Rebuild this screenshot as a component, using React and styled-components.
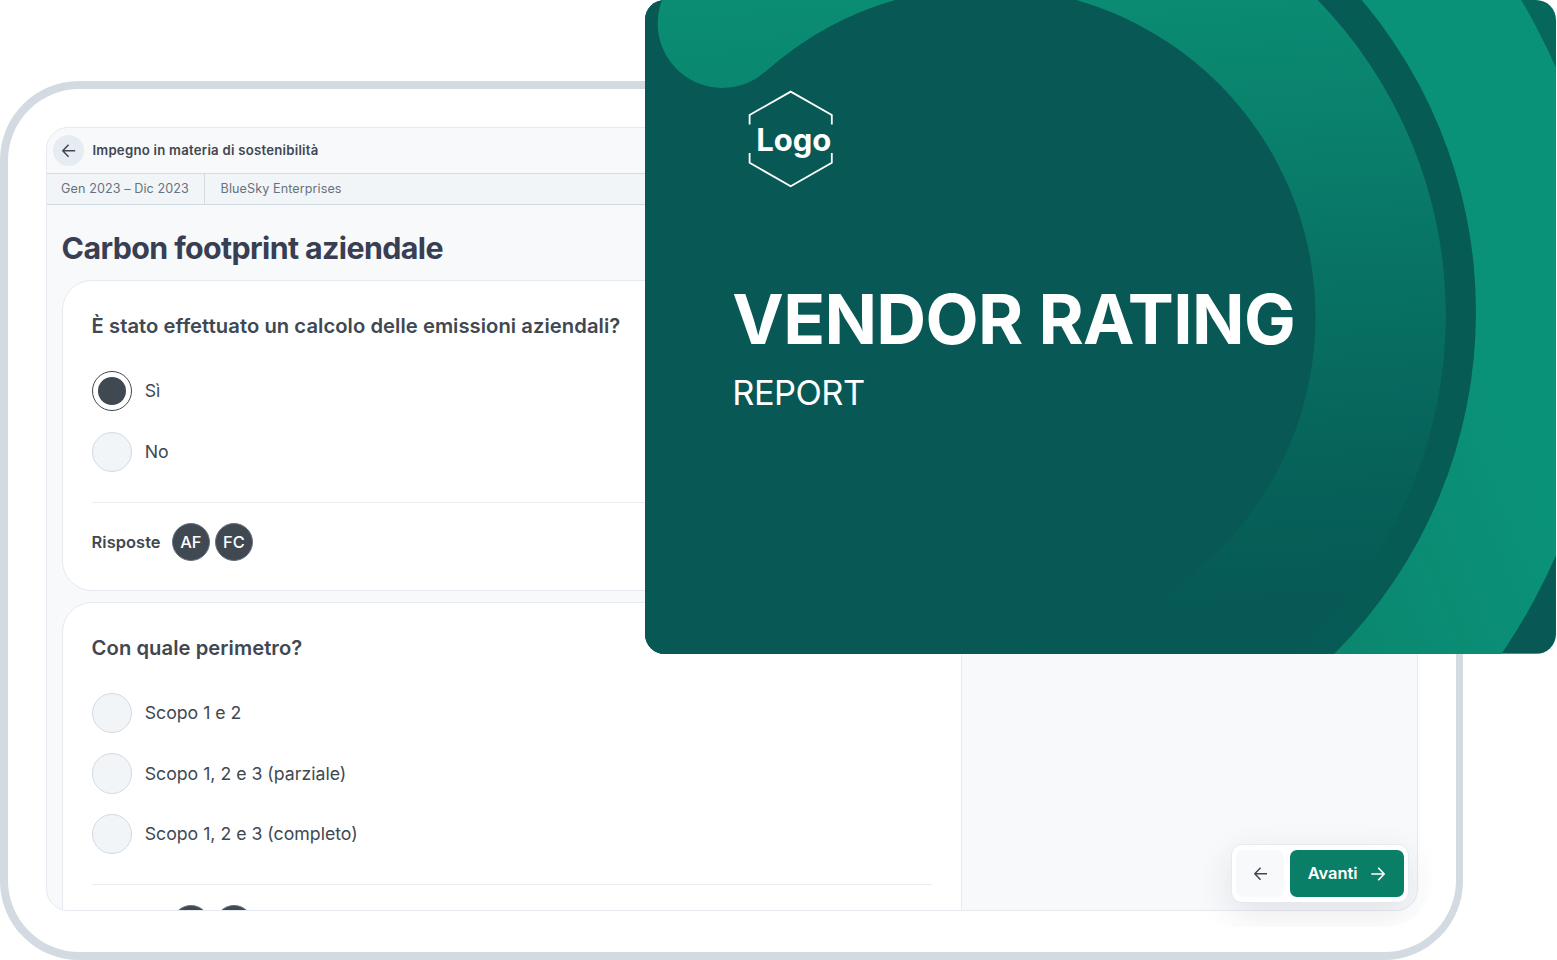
import React from 'react';
import styled, { createGlobalStyle } from 'styled-components';

const questions = [
  {
    title: 'È stato effettuato un calcolo delle emissioni aziendali?',
    options: ['Sì', 'No'],
    selected: 0,
  },
  {
    title: 'Con quale perimetro?',
    options: ['Scopo 1 e 2', 'Scopo 1, 2 e 3 (parziale)', 'Scopo 1, 2 e 3 (completo)'],
    selected: -1,
  },
];

const users = ['AF', 'FC'];

const Arrow = ({ size, right, stroke }) => (
  <svg width={size} height={size} viewBox="0 0 14 14" fill="none" stroke={stroke} strokeWidth="1.6">
    {right ? (
      <path d="M0.3 7H13M7.2 0.8L13.2 7L7.2 13.2" />
    ) : (
      <path d="M13.7 7H1M6.8 0.8L0.8 7L6.8 13.2" />
    )}
  </svg>
);

const Question = ({ title, options, selected }) => {
  return (
    <Card>
      <CardTitle>{title}</CardTitle>
      <Options>
        {options.map((option, index) => (
          <Option key={option}>
            <Radio $checked={index === selected} />
            {option}
          </Option>
        ))}
      </Options>
      <Answers>
        <AnswersLabel>Risposte</AnswersLabel>
        {users.map((user) => (
          <Avatar key={user}>{user}</Avatar>
        ))}
      </Answers>
    </Card>
  );
};

const Cover = () => (
  <CoverArt viewBox="0 0 911.4 653.7" preserveAspectRatio="none">
    <defs>
      <linearGradient id="ground" x1="0" y1="1" x2="1" y2="0">
        <stop offset="0.5" stopColor="#085955" />
        <stop offset="0.8" stopColor="#065c56" />
        <stop offset="1" stopColor="#06695d" />
      </linearGradient>
      <linearGradient id="middle" x1="0" y1="0" x2="1" y2="0">
        <stop offset="0.6" stopColor="#085955" />
        <stop offset="0.9" stopColor="#065b55" />
      </linearGradient>
      <linearGradient id="ring" gradientUnits="userSpaceOnUse" x1="0" y1="0" x2="40" y2="640">
        <stop offset="0" stopColor="#0a8e74" />
        <stop offset="0.2" stopColor="#0a846e" />
        <stop offset="0.5" stopColor="#087265" />
        <stop offset="0.8" stopColor="#06625a" />
        <stop offset="1" stopColor="#075955" />
      </linearGradient>
      <linearGradient id="outer" gradientUnits="userSpaceOnUse" x1="690" y1="653" x2="911" y2="560">
        <stop offset="0" stopColor="#0b866f" />
        <stop offset="1" stopColor="#0a9278" />
      </linearGradient>
    </defs>
    <rect width="911.4" height="653.7" fill="url(#ground)" />
    <circle cx="354" cy="311.5" r="608" fill="url(#outer)" />
    <circle cx="348" cy="312" r="483" fill="url(#middle)" />
    <path
      d="M120.2 72A329.5 329.5 0 1 1 341 646.5L349 767A451.6 451.6 0 0 0 349 -136.6L34 -60L77 24Z"
      fill="url(#ring)"
    />
    <circle cx="77.3" cy="23.4" r="64.6" fill="url(#ring)" />
    <circle cx="341" cy="317" r="329.5" fill="#085955" />
  </CoverArt>
);

const App = () => {
  return (
    <Page>
      <GlobalStyle />
      <Tablet>
        <TabletFace>
          <Screen>
            <TopBar>
              <BackButton>
                <Arrow size={13.5} stroke="#404852" />
              </BackButton>
              Impegno in materia di sostenibilità
            </TopBar>
            <InfoBar>
              <Period>Gen 2023 – Dic 2023</Period>
              <Company>BlueSky Enterprises</Company>
            </InfoBar>
            <Main>
              <Heading>Carbon footprint aziendale</Heading>
              <Cards>
                {questions.map((question) => (
                  <Question key={question.title} {...question} />
                ))}
              </Cards>
            </Main>
          </Screen>
        </TabletFace>
      </Tablet>
      <NavLayer>
        <Nav>
          <PrevButton>
            <Arrow size={13.5} stroke="#404852" />
          </PrevButton>
          <NextButton>
            Avanti
            <Arrow size={14} right stroke="#fff" />
          </NextButton>
        </Nav>
      </NavLayer>
      <Report>
        <Cover />
        <ReportBody>
          <Logo>
            <LogoFrame viewBox="0 0 86 98" fill="none" stroke="#fff" strokeWidth="1.8">
              <path d="M1.6 34.5V25L42.7 1.6L83.8 25V34.5M1.6 63V72.8L42.7 96.2L83.8 72.8V63" />
            </LogoFrame>
            <LogoText>Logo</LogoText>
          </Logo>
          <ReportTitle>VENDOR RATING</ReportTitle>
          <ReportSubtitle>REPORT</ReportSubtitle>
        </ReportBody>
      </Report>
    </Page>
  );
};

const GlobalStyle = createGlobalStyle`
  * {
    box-sizing: border-box;
  }

  body {
    margin: 0;
    background-color: #fff;
    font-family: Inter, sans-serif;
    color: #404852;
  }
`;

const Page = styled.div`
  position: relative;
  width: 1557px;
  height: 960px;
  padding-top: 81.3px;
  overflow: hidden;
`;

const Tablet = styled.div`
  width: 1463.4px;
  height: 878.7px;
  padding: 7.5px;
  border-radius: 79px;
  background-color: #d3dae2;
`;

const TabletFace = styled.div`
  width: 100%;
  height: 100%;
  padding: 38.2px 38.1px;
  border-radius: 71.5px;
  background-color: #fff;
`;

const Screen = styled.div`
  display: flex;
  flex-direction: column;
  width: 1372px;
  height: 784px;
  border: 1px solid #e5eaf1;
  border-radius: 22px;
  background-color: #f8f9fb;
  overflow: hidden;
`;

const TopBar = styled.div`
  display: flex;
  flex: none;
  align-items: center;
  gap: 8px;
  height: 46px;
  padding-left: 6.8px;
  border-bottom: 1px solid #d3dbe3;
  font-size: 13.2px;
  font-weight: 600;
  letter-spacing: 0.24px;
`;

const BackButton = styled.div`
  display: flex;
  align-items: center;
  justify-content: center;
  width: 31px;
  height: 31px;
  border-radius: 50%;
  background-color: #e7ecf3;
`;

const InfoBar = styled.div`
  display: flex;
  flex: none;
  height: 31px;
  border-bottom: 1px solid #cfd9e2;
  background-color: #f2f5f8;
  color: #66727f;
  font-size: 12.6px;
  line-height: 29px;
  letter-spacing: 0.09px;
`;

const Period = styled.div`
  width: 158.8px;
  padding-left: 14.5px;
  border-right: 1px solid #d3dbe3;
`;

const Company = styled.div`
  padding-left: 15.2px;
`;

const Main = styled.div`
  padding: 23px 15px 0;
`;

const Heading = styled.h1`
  margin: 0;
  color: #383f52;
  font-size: 30.4px;
  font-weight: 700;
  line-height: 40px;
  letter-spacing: -0.62px;
`;

const Cards = styled.div`
  display: flex;
  flex-direction: column;
  gap: 11px;
  width: 900px;
  margin-top: 12px;
`;

const Card = styled.div`
  padding: 32px 29px 29px;
  border: 1px solid #e5eaf1;
  border-radius: 30px;
  background-color: #fff;
`;

const CardTitle = styled.div`
  font-size: 20.2px;
  font-weight: 600;
  line-height: 26px;
  letter-spacing: 0.06px;
`;

const Options = styled.div`
  display: flex;
  flex-direction: column;
  gap: 20.4px;
  padding: 32.2px 0 29.4px;
  border-bottom: 1.4px solid #e8ecf3;
`;

const Option = styled.div`
  display: flex;
  align-items: center;
  gap: 12.8px;
  font-size: 17.7px;
  line-height: 24px;
`;

const Radio = styled.div`
  width: 40.3px;
  height: 40.3px;
  padding: 5px;
  border: 1.3px solid ${({ $checked }) => ($checked ? '#404852' : '#d3dae2')};
  border-radius: 50%;
  background-color: ${({ $checked }) => ($checked ? '#404852' : '#f2f5f8')};
  background-clip: ${({ $checked }) => ($checked ? 'content-box' : 'border-box')};
`;

const Answers = styled.div`
  display: flex;
  align-items: center;
  gap: 5px;
  padding-top: 20px;
`;

const AnswersLabel = styled.div`
  margin-right: 6.3px;
  font-size: 16.4px;
  font-weight: 600;
  letter-spacing: 0.06px;
`;

const Avatar = styled.div`
  display: flex;
  align-items: center;
  justify-content: center;
  width: 38px;
  height: 38px;
  border: 1.3px solid #66727f;
  border-radius: 50%;
  background-color: #404852;
  color: #fff;
  font-size: 16.4px;
  font-weight: 500;
`;

/* keeps the shadow of the buttons inside the corner of the tablet */
const NavLayer = styled.div`
  position: absolute;
  left: 1180px;
  top: 800px;
  width: 253px;
  height: 127px;
  padding: 44px 0 0 51px;
  border-bottom-right-radius: 48px;
  overflow: hidden;
`;

const Nav = styled.div`
  display: flex;
  gap: 6px;
  width: 178px;
  height: 59px;
  padding: 5px 4px;
  border: 1px solid #e5eaf1;
  border-radius: 11px;
  background-color: #fff;
  box-shadow: 0 11px 34px rgba(40, 45, 60, 0.11);
`;

const PrevButton = styled.div`
  display: flex;
  align-items: center;
  justify-content: center;
  width: 48px;
  padding-left: 1px;
  border-radius: 7px;
  background-color: #f8f9fb;
`;

const NextButton = styled.div`
  display: flex;
  align-items: center;
  justify-content: center;
  gap: 13px;
  width: 114px;
  padding: 0 1.6px 0 0;
  border-radius: 7px;
  background-color: #0a7f68;
  color: #fff;
  font-size: 16.4px;
  font-weight: 600;
  line-height: 19px;
`;

const Report = styled.div`
  position: absolute;
  left: 645px;
  top: 0;
  width: 911.4px;
  height: 653.7px;
  border-radius: 20px;
  overflow: hidden;
  color: #fff;
`;

const CoverArt = styled.svg`
  position: absolute;
  inset: 0;
  width: 100%;
  height: 100%;
`;

const ReportBody = styled.div`
  position: relative;
  padding: 90px 0 0 87.3px;
`;

const Logo = styled.div`
  position: relative;
  display: flex;
  align-items: center;
  justify-content: center;
  width: 86px;
  height: 98px;
  margin-left: 15.7px;
`;

const LogoFrame = styled.svg`
  position: absolute;
  inset: 0;
`;

const LogoText = styled.span`
  margin-left: 5.5px;
  font-size: 31px;
  font-weight: 700;
`;

const ReportTitle = styled.div`
  margin-top: 91px;
  font-size: 69px;
  font-weight: 700;
  line-height: 80px;
  letter-spacing: -0.65px;
  white-space: nowrap;
`;

const ReportSubtitle = styled.div`
  margin-top: 13px;
  font-size: 34.4px;
  line-height: 42px;
  letter-spacing: -0.5px;
`;

export default App;
